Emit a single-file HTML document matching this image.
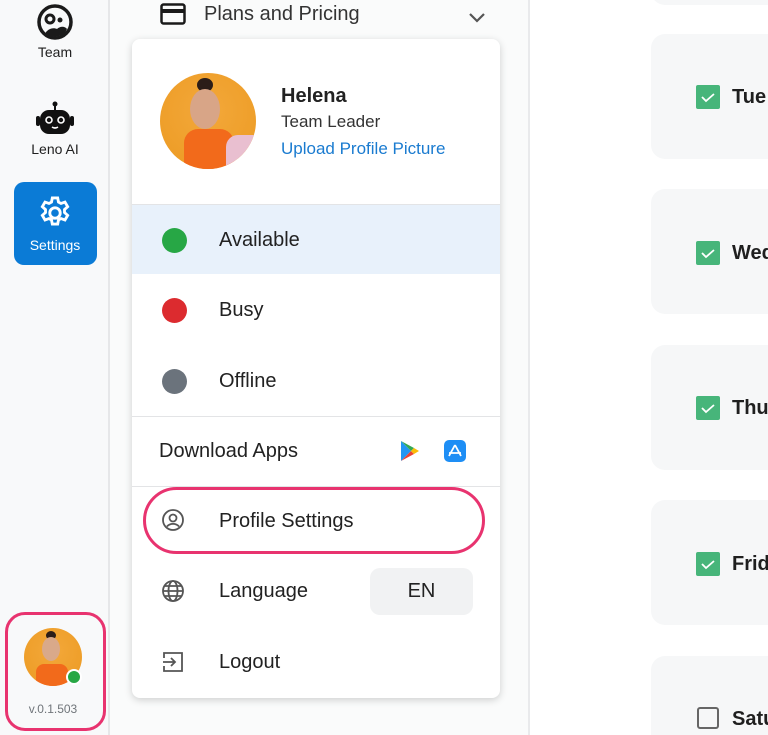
<!DOCTYPE html>
<html style="width:768px;height:735px;overflow:hidden"><head><meta charset="utf-8"><style>
*{box-sizing:border-box;margin:0;padding:0}
body{width:768px;height:735px;overflow:hidden;background:#fff;font-family:"Liberation Sans",sans-serif;color:#1f1f1f;position:relative}
.abs{position:absolute}
.side{left:0;top:0;width:110px;height:735px;background:#f8f9fa;border-right:2px solid #e6e7e9}
.mid{left:110px;top:0;width:420px;height:735px;background:#fafbfb;border-right:2px solid #e9eaec}
.card{left:651px;width:117px;height:125px;background:#f6f7f8;border-radius:14px 0 0 14px}
.day{left:732px;font-size:20px;font-weight:bold;color:#1f1f1f}
.lbl{font-size:14px;width:110px;text-align:center;left:0}
.menu{left:132px;top:39px;width:368px;height:659px;background:#fff;border-radius:8px;box-shadow:0 2px 8px rgba(0,0,0,.18)}
.t20{font-size:20px;color:#222}
.dot{width:25px;height:25px;border-radius:50%;left:162px}
.hr{left:132px;width:368px;height:1px;background:#e3e4e6}
.av{border-radius:50%;background:radial-gradient(circle at 50% 40%,#f3a83a,#ec9a22);overflow:hidden}
</style></head><body>
<div class="abs side"></div>
<div class="abs mid"></div>

<div class="abs card" style="top:-100px;height:105px"></div>
<div class="abs card" style="top:34px"></div>
<div class="abs card" style="top:189px"></div>
<div class="abs card" style="top:345px"></div>
<div class="abs card" style="top:500px"></div>
<div class="abs card" style="top:656px;height:79px;border-radius:14px 0 0 0"></div>
<svg class="abs" style="left:696px;top:85px" width="24" height="24"><rect width="24" height="24" rx="2" fill="#47b57a"/><path d="M6 12l4 4 8-7" stroke="#fff" stroke-width="1.8" fill="none"/></svg>
<svg class="abs" style="left:696px;top:241px" width="24" height="24"><rect width="24" height="24" rx="2" fill="#47b57a"/><path d="M6 12l4 4 8-7" stroke="#fff" stroke-width="1.8" fill="none"/></svg>
<svg class="abs" style="left:696px;top:396px" width="24" height="24"><rect width="24" height="24" rx="2" fill="#47b57a"/><path d="M6 12l4 4 8-7" stroke="#fff" stroke-width="1.8" fill="none"/></svg>
<svg class="abs" style="left:696px;top:552px" width="24" height="24"><rect width="24" height="24" rx="2" fill="#47b57a"/><path d="M6 12l4 4 8-7" stroke="#fff" stroke-width="1.8" fill="none"/></svg>
<div class="abs" style="left:697px;top:707px;width:22px;height:22px;border:2.5px solid #666;border-radius:3px"></div>
<div class="abs day" style="top:86px">Tue</div>
<div class="abs day" style="top:242px">Wed</div>
<div class="abs day" style="top:397px">Thu</div>
<div class="abs day" style="top:553px">Frid</div>
<div class="abs day" style="top:708px">Satu</div>

<svg class="abs" style="left:37px;top:4px" width="36" height="36" viewBox="0 0 36 36"><circle cx="18" cy="18" r="16" fill="none" stroke="#1a1a1a" stroke-width="3.5"/><circle cx="13" cy="15" r="4" fill="none" stroke="#1a1a1a" stroke-width="3"/><circle cx="23" cy="16" r="2.5" fill="#1a1a1a"/><path d="M8 30c2-5 8-7 12-5 3-3 8-3 10 0l-2 4c-4 4-14 5-20 1z" fill="#1a1a1a"/></svg>
<div class="abs lbl" style="top:44px">Team</div>
<svg class="abs" style="left:35px;top:101px" width="40" height="34" viewBox="0 0 40 34"><circle cx="20" cy="3" r="2.5" fill="#111"/><rect x="19" y="3" width="2" height="7" fill="#111"/><rect x="5" y="9" width="30" height="24" rx="9" fill="#111"/><rect x="1" y="15" width="4" height="10" rx="2" fill="#111"/><rect x="35" y="15" width="4" height="10" rx="2" fill="#111"/><circle cx="14" cy="19" r="3" fill="none" stroke="#fff" stroke-width="1.6"/><circle cx="26" cy="19" r="3" fill="none" stroke="#fff" stroke-width="1.6"/><path d="M17 26q3 2 6 0" stroke="#fff" stroke-width="1.6" fill="none"/></svg>
<div class="abs lbl" style="top:141px">Leno AI</div>
<div class="abs" style="left:14px;top:182px;width:83px;height:83px;background:#0b7bd6;border-radius:10px"></div>
<svg class="abs" style="left:36px;top:194px" width="38" height="38" viewBox="0 0 24 24"><path fill="none" stroke="#fff" stroke-width="1.8" d="M10.3 2.5h3.4l.5 2.6 1.6.9 2.5-.9 1.7 2.9-2 1.8v1.9l2 1.8-1.7 2.9-2.5-.9-1.6.9-.5 2.6h-3.4l-.5-2.6-1.6-.9-2.5.9-1.7-2.9 2-1.8v-1.9l-2-1.8 1.7-2.9 2.5.9 1.6-.9z"/><circle cx="12" cy="12" r="3.3" fill="none" stroke="#fff" stroke-width="1.8"/></svg>
<div class="abs lbl" style="top:237px;color:#fff;left:0">Settings</div>

<div class="abs" style="left:5px;top:612px;width:101px;height:119px;border:3px solid #e8336f;border-radius:20px"></div>
<div class="abs av" style="left:24px;top:628px;width:58px;height:58px"><div class="abs" style="left:22px;top:3px;width:10px;height:9px;border-radius:50%;background:#2b1d18"></div><div class="abs" style="left:18px;top:9px;width:18px;height:24px;border-radius:50%;background:#d9a98a"></div><div class="abs" style="left:12px;top:36px;width:32px;height:26px;background:#f26a1b;border-radius:8px 8px 0 0"></div></div>
<div class="abs" style="left:66px;top:669px;width:16px;height:16px;border-radius:50%;background:#27a745;border:2px solid #fff"></div>
<div class="abs" style="left:0;top:702px;width:106px;text-align:center;font-size:12px;color:#70757a">v.0.1.503</div>

<svg class="abs" style="left:160px;top:3px" width="26" height="22" viewBox="0 0 26 22"><rect x="1.5" y="1.5" width="23" height="19" rx="2" fill="none" stroke="#1a1a1a" stroke-width="2.5"/><rect x="1.5" y="6" width="23" height="4" fill="#1a1a1a"/></svg>
<div class="abs t20" style="left:204px;top:3px;color:#333">Plans and Pricing</div>
<svg class="abs" style="left:468px;top:12px" width="18" height="12"><path d="M2 2l7 7 7-7" stroke="#555" stroke-width="2.2" fill="none"/></svg>

<div class="abs menu"></div>
<div class="abs av" style="left:160px;top:73px;width:96px;height:96px"><div class="abs" style="left:37px;top:5px;width:16px;height:14px;border-radius:50%;background:#2b1d18"></div><div class="abs" style="left:30px;top:16px;width:30px;height:40px;border-radius:50%;background:#d8a587"></div><div class="abs" style="left:24px;top:56px;width:50px;height:42px;background:#f26a1b;border-radius:14px 14px 0 0"></div><div class="abs" style="left:66px;top:62px;width:30px;height:36px;background:#e9bfd0;border-radius:12px 0 0 0"></div></div>
<div class="abs" style="left:281px;top:85px;font-size:20px;font-weight:bold;color:#222">Helena</div>
<div class="abs" style="left:281px;top:112px;font-size:17px;color:#333">Team Leader</div>
<div class="abs" style="left:281px;top:139px;font-size:17px;color:#1a7bd0">Upload Profile Picture</div>
<div class="abs hr" style="top:204px"></div>
<div class="abs" style="left:132px;top:205px;width:368px;height:69px;background:#e8f1fb"></div>
<div class="abs dot" style="top:228px;background:#27a745"></div>
<div class="abs t20" style="left:219px;top:229px">Available</div>
<div class="abs dot" style="top:298px;background:#dc2b2f"></div>
<div class="abs t20" style="left:219px;top:299px">Busy</div>
<div class="abs dot" style="top:369px;background:#6b737c"></div>
<div class="abs t20" style="left:219px;top:370px">Offline</div>
<div class="abs hr" style="top:416px"></div>
<div class="abs t20" style="left:159px;top:440px">Download Apps</div>
<svg class="abs" style="left:400px;top:440px" width="20" height="22" viewBox="0 0 20 22"><path d="M1 1l10 10L1 21z" fill="#2196f3"/><path d="M1 1l13 7-3 3z" fill="#34a853"/><path d="M1 21l13-7-3-3z" fill="#ea4335"/><path d="M14 8l5 3-5 3-3-3z" fill="#fbbc05"/></svg>
<svg class="abs" style="left:444px;top:440px" width="22" height="22" viewBox="0 0 22 22"><rect width="22" height="22" rx="5" fill="#1e8ef5"/><path d="M11 5L5 16M11 5l6 11M5 13h12" stroke="#fff" stroke-width="1.8"/></svg>
<div class="abs hr" style="top:486px"></div>
<div class="abs" style="left:143px;top:487px;width:342px;height:67px;border:3px solid #e8336f;border-radius:34px"></div>
<svg class="abs" style="left:161px;top:508px" width="24" height="24" viewBox="0 0 24 24"><circle cx="12" cy="12" r="10" fill="none" stroke="#555" stroke-width="1.8"/><circle cx="12" cy="10" r="3.5" fill="none" stroke="#555" stroke-width="1.8"/><path d="M6 18.5c3-3.5 9-3.5 12 0" fill="none" stroke="#555" stroke-width="1.8"/></svg>
<div class="abs t20" style="left:219px;top:510px">Profile Settings</div>
<svg class="abs" style="left:161px;top:579px" width="24" height="24" viewBox="0 0 24 24" fill="none" stroke="#555" stroke-width="1.8"><circle cx="12" cy="12" r="10"/><ellipse cx="12" cy="12" rx="4.5" ry="10"/><path d="M2 12h20M4 7h16M4 17h16"/></svg>
<div class="abs t20" style="left:219px;top:580px">Language</div>
<div class="abs" style="left:370px;top:568px;width:103px;height:47px;background:#f1f2f3;border-radius:10px;text-align:center;line-height:47px;font-size:20px;color:#222">EN</div>
<svg class="abs" style="left:161px;top:650px" width="24" height="24" viewBox="0 0 24 24" fill="none" stroke="#555" stroke-width="1.8"><path d="M3 8V3h18v18H3v-5"/><path d="M2 12h12M10 8l4 4-4 4"/></svg>
<div class="abs t20" style="left:219px;top:651px">Logout</div>
</body></html>
